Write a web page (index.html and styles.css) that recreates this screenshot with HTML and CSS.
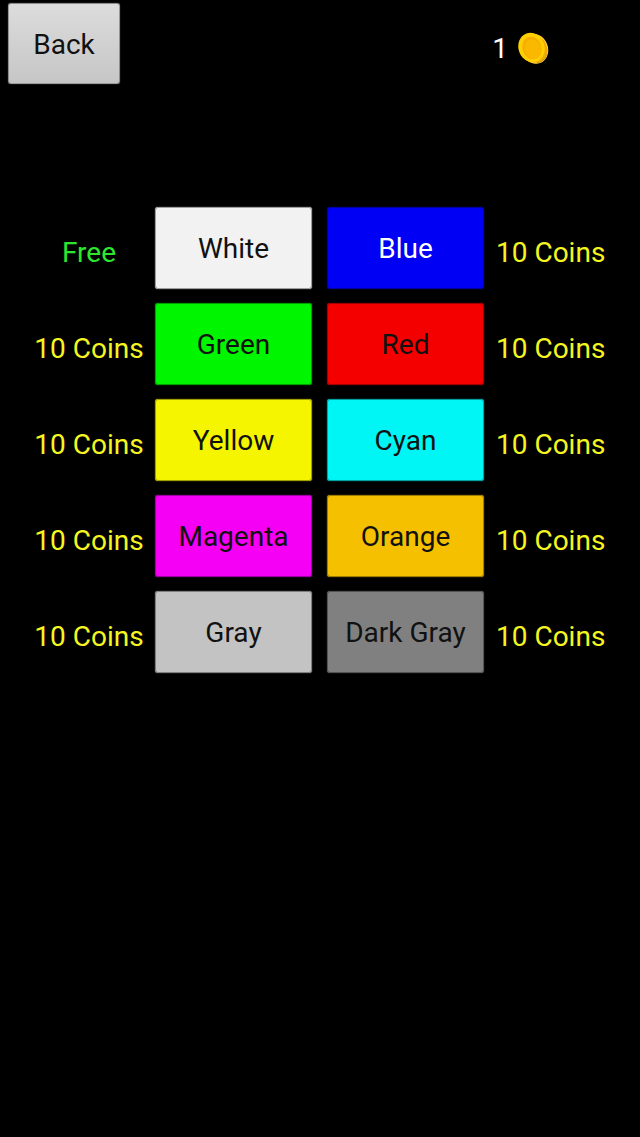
FILE: index.html
```html
<!DOCTYPE html>
<html lang="en">
<head>
  <meta charset="UTF-8">
  <meta name="viewport" content="width=device-width, initial-scale=1.0">
  <title>Colors</title>
  <link rel="stylesheet" href="styles.css">
</head>
<body>
  <div class="top-bar">
    <button class="back-btn">Back</button>
    <div class="coins">
      <span class="coin-count">1</span>
      <svg class="coin" viewBox="0 0 34 34" width="34" height="34">
        <ellipse cx="19" cy="17.5" rx="13.5" ry="15" transform="rotate(-20 19 17.5)" fill="#f2a900"/>
        <ellipse cx="20" cy="18" rx="12.5" ry="14.5" transform="rotate(-20 20 18)" fill="none" stroke="#ffd84a" stroke-width="1"/>
        <ellipse cx="16.5" cy="16.5" rx="13" ry="15" transform="rotate(-20 16.5 16.5)" fill="#ffd000"/>
        <ellipse cx="17" cy="17" rx="9.5" ry="11.5" transform="rotate(-20 17 17)" fill="#f6ae00"/>
        <ellipse cx="18" cy="18" rx="8" ry="10" transform="rotate(-20 18 18)" fill="#fbb800"/>
      </svg>
    </div>
  </div>

  <div class="shop">
    <div class="price free">Free</div>
    <button class="swatch white">White</button>
    <button class="swatch blue">Blue</button>
    <div class="price right">10 Coins</div>

    <div class="price">10 Coins</div>
    <button class="swatch green">Green</button>
    <button class="swatch red">Red</button>
    <div class="price right">10 Coins</div>

    <div class="price">10 Coins</div>
    <button class="swatch yellow">Yellow</button>
    <button class="swatch cyan">Cyan</button>
    <div class="price right">10 Coins</div>

    <div class="price">10 Coins</div>
    <button class="swatch magenta">Magenta</button>
    <button class="swatch orange">Orange</button>
    <div class="price right">10 Coins</div>

    <div class="price">10 Coins</div>
    <button class="swatch gray">Gray</button>
    <button class="swatch dark-gray">Dark Gray</button>
    <div class="price right">10 Coins</div>
  </div>
</body>
</html>
```

FILE: styles.css
```css
* {
  margin: 0;
  padding: 0;
  box-sizing: border-box;
}

body {
  font-family: 'Roboto', sans-serif;
  background-color: #000;
  height: 100vh;
  overflow: hidden;
}

.top-bar {
  display: flex;
  justify-content: space-between;
  align-items: flex-start;
  padding: 3px 91px 0 8px;
  height: 207px;
}

.back-btn {
  width: 112px;
  height: 81px;
  padding-top: 2px;
  font-family: inherit;
  font-size: 28px;
  color: #111;
  background: linear-gradient(180deg, #dcdcdc, #c6c6c6);
  border: 1px solid rgba(0, 0, 0, 0.3);
  border-radius: 3px;
  box-shadow: 0 0 1px #999;
}

.coins {
  display: flex;
  align-items: center;
  gap: 7px;
  margin-top: 28px;
}

.coin-count {
  font-size: 28px;
  color: #fff;
}

.shop {
  display: grid;
  grid-template-columns: 132px 157px 172px 1fr;
  grid-auto-rows: 82px;
  row-gap: 14px;
  padding-left: 23px;
}

.price {
  font-size: 28px;
  line-height: 92px;
  color: #f5f520;
  text-align: center;
  white-space: nowrap;
}

.price.right {
  text-align: left;
  margin-left: 12px;
}

.price.free {
  color: #2fe62f;
}

.swatch {
  font-family: inherit;
  font-size: 28px;
  color: #111;
  background-color: var(--swatch);
  border: 1px solid rgba(0, 0, 0, 0.35);
  border-radius: 3px;
  box-shadow: 0 0 1px var(--swatch);
}

.swatch:nth-child(4n + 3) {
  margin-left: 15px;
}

.white { --swatch: #f2f2f2; }
.blue { --swatch: #0000f5; color: #fff; }
.green { --swatch: #00f500; }
.red { --swatch: #f50000; }
.yellow { --swatch: #f5f500; }
.cyan { --swatch: #00f5f5; }
.magenta { --swatch: #f500f5; }
.orange { --swatch: #f5c000; }
.gray { --swatch: #c3c3c3; }
.dark-gray { --swatch: #808080; }
```
